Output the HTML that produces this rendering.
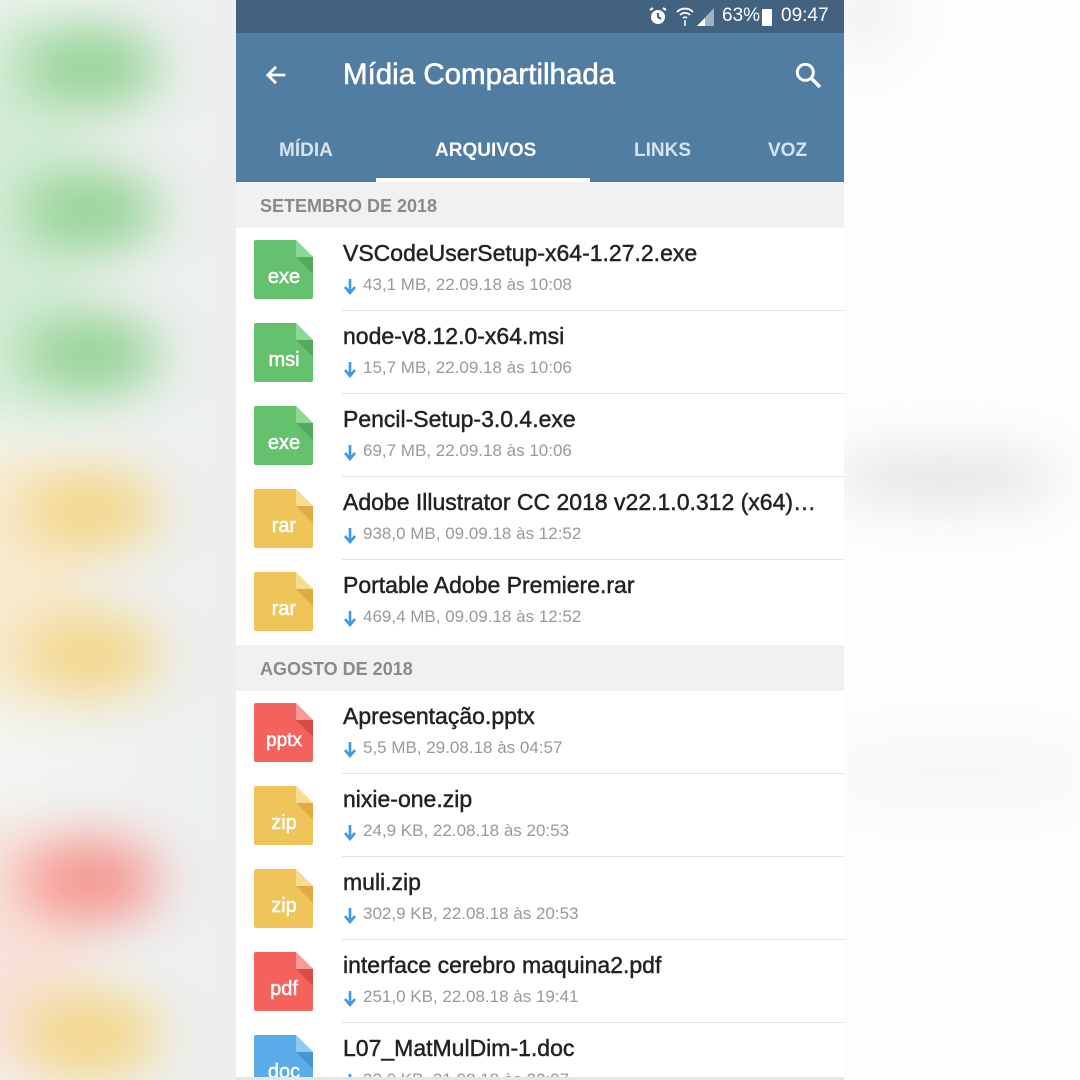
<!DOCTYPE html>
<html><head><meta charset="utf-8"><style>
*{margin:0;padding:0;box-sizing:border-box}
body{width:1080px;height:1080px;overflow:hidden;position:relative;background:#f0f0f0;font-family:"Liberation Sans",sans-serif}
.bg{position:absolute;inset:0;overflow:hidden}
.blob{position:absolute;border-radius:50%;filter:blur(26px)}
.phone{position:absolute;left:236px;top:0;width:608px;height:1080px;background:#fff;overflow:hidden}
.sb{position:absolute;left:0;top:0;width:608px;height:33px;background:#43627f;color:#fff;font-size:19px}
.hd{position:absolute;left:0;top:33px;width:608px;height:149px;background:#527da3;color:#fff}
.title{position:absolute;left:107px;top:25px;font-size:29.5px;-webkit-text-stroke:0.6px #fff}
.tab{position:absolute;top:107px;font-size:19px;font-weight:bold;color:#d6e3ef}
.sec{position:absolute;left:0;width:608px;height:46px;background:#f1f1f1;color:#8a8a8a;font-size:18px;font-weight:bold;padding:14px 0 0 24px}
.row{position:absolute;left:0;width:608px;height:83px}
.ic{position:absolute;left:18px;top:0}
.nm{position:absolute;left:107px;top:0px;font-size:23px;color:#222;white-space:nowrap;-webkit-text-stroke:0.45px #222}
.mt{position:absolute;left:127px;top:35px;font-size:17px;color:#999;white-space:nowrap}
.ar{position:absolute;left:107px;top:38px}
.dv{position:absolute;left:106px;top:70px;width:502px;height:1px;background:#e4e4e4}
</style></head><body>
<div class="bg">
<div style="position:absolute;left:0;top:0;width:236px;height:1080px;background:linear-gradient(90deg,#f3f6f3,#eceeef)"></div>
<div class="blob" style="left:-60px;top:0;width:140px;height:430px;background:#d5edd8"></div>
<div class="blob" style="left:-60px;top:450px;width:140px;height:260px;background:#f8ebcf"></div>
<div class="blob" style="left:-60px;top:820px;width:140px;height:260px;background:#f8e2da"></div>
<div class="blob" style="left:20px;top:25px;width:140px;height:85px;background:#95d395"></div>
<div class="blob" style="left:20px;top:168px;width:140px;height:85px;background:#95d395"></div>
<div class="blob" style="left:20px;top:312px;width:140px;height:85px;background:#95d395"></div>
<div class="blob" style="left:20px;top:468px;width:140px;height:85px;background:#f3d68a"></div>
<div class="blob" style="left:20px;top:612px;width:140px;height:85px;background:#f3d68a"></div>
<div class="blob" style="left:20px;top:838px;width:140px;height:85px;background:#f5968f"></div>
<div class="blob" style="left:20px;top:990px;width:140px;height:90px;background:#f3d68a"></div>
<div style="position:absolute;left:844px;top:0;width:236px;height:1080px;background:#fdfdfd"></div>
<div class="blob" style="left:830px;top:455px;width:230px;height:45px;background:#e0e0e0"></div>
<div class="blob" style="left:830px;top:750px;width:260px;height:45px;background:#f4f4f4"></div>
<div class="blob" style="left:830px;top:-20px;width:70px;height:70px;background:#efefef"></div>
</div>
<div class="phone">
<div class="sb">
<svg style="position:absolute;left:412px;top:6px" width="20" height="20" viewBox="0 0 20 20"><circle cx="10" cy="11" r="7" fill="#fff"/><path d="M10 7v4l3 2" stroke="#43627f" stroke-width="2" fill="none"/><path d="M2 4l3-2M18 4l-3-2" stroke="#fff" stroke-width="2"/></svg>
<svg style="position:absolute;left:440px;top:6px" width="18" height="20" viewBox="0 0 18 20"><path d="M1 6a11 11 0 0 1 16 0M4 9a7 7 0 0 1 10 0M7 12a3 3 0 0 1 4 0" stroke="#fff" stroke-width="1.8" fill="none"/><path d="M9 14v6" stroke="#fff" stroke-width="1.5"/></svg>
<svg style="position:absolute;left:461px;top:8px" width="18" height="18" viewBox="0 0 18 18"><path d="M17 0V18H0z" fill="#fff" opacity=".5"/><path d="M8 10V18H0z" fill="#fff"/></svg>
<span style="position:absolute;left:486px;top:5px">63%</span>
<div style="position:absolute;left:526px;top:9px;width:10px;height:17px;background:#fff;border-radius:1px"></div>
<span style="position:absolute;left:545px;top:5px">09:47</span>
</div>
<div class="hd">
<svg style="position:absolute;left:26px;top:28px" width="28" height="28" viewBox="0 0 24 24"><path d="M20 12H5M12 5l-7 7 7 7" stroke="#fff" stroke-width="2.4" fill="none"/></svg>
<div class="title">Mídia Compartilhada</div>
<svg style="position:absolute;left:556px;top:26px" width="32" height="32" viewBox="0 0 24 24"><circle cx="10" cy="10" r="6" stroke="#fff" stroke-width="2.2" fill="none"/><path d="M14.5 14.5L21 21" stroke="#fff" stroke-width="2.6"/></svg>
<div class="tab" style="left:43px">MÍDIA</div>
<div class="tab" style="left:199px;color:#fff">ARQUIVOS</div>
<div class="tab" style="left:398px">LINKS</div>
<div class="tab" style="left:532px">VOZ</div>
<div style="position:absolute;left:140px;top:145px;width:214px;height:4px;background:#fff"></div>
</div>
<div class="sec" style="top:182px">SETEMBRO DE 2018</div>
<div class="sec" style="top:645px">AGOSTO DE 2018</div>
<div id="rows"></div>
<div style="position:absolute;left:0;top:1077px;width:608px;height:3px;background:#e6e6e6"></div>
</div>
<script>
var data=[
[240,'#66c16e','#8fd795','#55a95d','exe','VSCodeUserSetup-x64-1.27.2.exe','43,1 MB, 22.09.18 às 10:08'],
[323,'#66c16e','#8fd795','#55a95d','msi','node-v8.12.0-x64.msi','15,7 MB, 22.09.18 às 10:06'],
[406,'#66c16e','#8fd795','#55a95d','exe','Pencil-Setup-3.0.4.exe','69,7 MB, 22.09.18 às 10:06'],
[489,'#efc55a','#f8dc8f','#e0ab45','rar','Adobe Illustrator CC 2018 v22.1.0.312 (x64)…','938,0 MB, 09.09.18 às 12:52'],
[572,'#efc55a','#f8dc8f','#e0ab45','rar','Portable Adobe Premiere.rar','469,4 MB, 09.09.18 às 12:52',1],
[703,'#f4625d','#f99a94','#d94b47','pptx','Apresentação.pptx','5,5 MB, 29.08.18 às 04:57'],
[786,'#efc55a','#f8dc8f','#e0ab45','zip','nixie-one.zip','24,9 KB, 22.08.18 às 20:53'],
[869,'#efc55a','#f8dc8f','#e0ab45','zip','muli.zip','302,9 KB, 22.08.18 às 20:53'],
[952,'#f4625d','#f99a94','#d94b47','pdf','interface cerebro maquina2.pdf','251,0 KB, 22.08.18 às 19:41'],
[1035,'#5aade8','#8fcaf4','#4a94d0','doc','L07_MatMulDim-1.doc','22,0 KB, 21.08.18 às 22:07',1]];
var h='';
data.forEach(function(d){
h+='<div class="row" style="top:'+d[0]+'px"><svg class="ic" width="60" height="60" viewBox="0 0 60 60"><path d="M2 0H42L59 17V57a2 2 0 0 1-2 2H2a2 2 0 0 1-2-2V2a2 2 0 0 1 2-2z" fill="'+d[1]+'"/><path d="M42 17L59 34V17z" fill="'+d[3]+'"/><path d="M42 0L59 17H42z" fill="'+d[2]+'"/><text x="30" y="43" text-anchor="middle" font-family="Liberation Sans,sans-serif" font-size="'+(d[4]=='pptx'?19:20)+'" fill="#fff" stroke="#fff" stroke-width="0.5">'+d[4]+'</text></svg>'+
'<div class="nm">'+d[5]+'</div><svg class="ar" width="14" height="17" viewBox="0 0 14 17"><path d="M7 1v12M2 9l5 6 5-6" stroke="#3d9ae6" stroke-width="2.6" fill="none"/></svg><div class="mt">'+d[6]+'</div>'+(d[7]?'':'<div class="dv"></div>')+'</div>';
});
document.getElementById('rows').innerHTML=h;
</script>
</body></html>
